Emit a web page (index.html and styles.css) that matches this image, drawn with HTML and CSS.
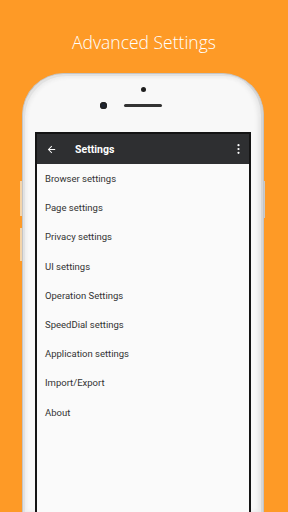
FILE: index.html
```html
<!DOCTYPE html>
<html lang="en">
<head>
    <meta charset="UTF-8">
    <meta name="viewport" content="width=device-width, initial-scale=1.0">
    <title>Advanced Settings</title>
    <link rel="stylesheet" href="styles.css">
</head>
<body>
    <h1 class="title">Advanced Settings</h1>
    <div class="phone">
        <span class="side-btn left-a"></span>
        <span class="side-btn left-b"></span>
        <span class="side-btn right-a"></span>
        <div class="phone-top">
            <div class="sensor"></div>
            <div class="cam-row">
                <span class="camera"></span>
                <span class="speaker"></span>
                <span class="spacer"></span>
            </div>
        </div>
        <div class="screen">
            <div class="toolbar">
                <svg class="back" width="11" height="11" viewBox="0 0 24 24"><path d="M20 11H7.83l5.59-5.59L12 4l-8 8 8 8 1.41-1.41L7.83 13H20v-2z" fill="#fff"/></svg>
                <span class="toolbar-title">Settings</span>
                <svg class="more" width="3" height="10" viewBox="0 0 3 10"><circle cx="1.5" cy="1.2" r="1.1" fill="#fff"/><circle cx="1.5" cy="5" r="1.1" fill="#fff"/><circle cx="1.5" cy="8.8" r="1.1" fill="#fff"/></svg>
            </div>
            <ul class="menu">
                <li>Browser settings</li>
                <li>Page settings</li>
                <li>Privacy settings</li>
                <li>UI settings</li>
                <li>Operation Settings</li>
                <li>SpeedDial settings</li>
                <li>Application settings</li>
                <li>Import/Export</li>
                <li>About</li>
            </ul>
        </div>
    </div>
</body>
</html>
```

FILE: styles.css
```css
body { margin: 0; height: 512px; overflow: hidden; background-color: #fe9a26; font-family: Roboto, "Noto Sans", sans-serif; }
.title {
    margin: 0;
    height: 73px;
    box-sizing: border-box;
    padding-top: 30px;
    line-height: 24px;
    text-align: center;
    color: #fff;
    font-family: "Open Sans", sans-serif;
    font-weight: 300;
    font-size: 17.5px;
}
.phone {
    position: relative;
    margin-left: 22px;
    width: 242px;
    height: 439px;
    box-sizing: border-box;
    background-color: #f8f8f8;
    border: 1px solid #c4c4c4;
    border-bottom: none;
    border-radius: 42px 42px 0 0;
    box-shadow: inset 2px 2px 0 #e2e2e2, inset -2px 0 0 #d6d6d6, inset 4px 4px 3px #eeeeee, inset -5px 0 4px #e6e6e6;
}
.side-btn { position: absolute; width: 2px; background-color: #f5d5aa; }
.left-a { left: -3px; top: 107px; height: 35px; }
.left-b { left: -3px; top: 154px; height: 33px; }
.right-a { right: -2px; top: 107px; height: 37px; background-color: #c9c9c9; width: 1px; }
.phone-top { height: 58px; padding-top: 13px; box-sizing: border-box; }
.sensor { width: 5px; height: 5px; border-radius: 50%; background-color: #1e1e1e; margin: 0 auto; }
.cam-row { display: flex; justify-content: center; align-items: center; margin-top: 10px; }
.camera { width: 7px; height: 7px; border-radius: 50%; background-color: #1d2433; box-shadow: inset 0 0 0 1.5px #222; margin-right: 17px; }
.speaker { width: 38px; height: 3px; border-radius: 2px; background-color: #333; }
.spacer { width: 7px; margin-left: 17px; }
.screen {
    margin: 0 12px;
    height: 400px;
    border: 2px solid #141414;
    background-color: #fafafa;
}
.toolbar {
    display: flex;
    align-items: center;
    height: 30px;
    background-color: #2e2f31;
    color: #fff;
    padding: 0 9px 0 9px;
}
.back { margin-right: 18px; }
.toolbar-title { flex-grow: 1; font-weight: bold; font-size: 10.5px; }
.menu { list-style: none; margin: 0; padding: 0; }
.menu li {
    height: 29.2px;
    line-height: 29px;
    padding-left: 8px;
    font-size: 9.5px;
    color: #333;
}
```
